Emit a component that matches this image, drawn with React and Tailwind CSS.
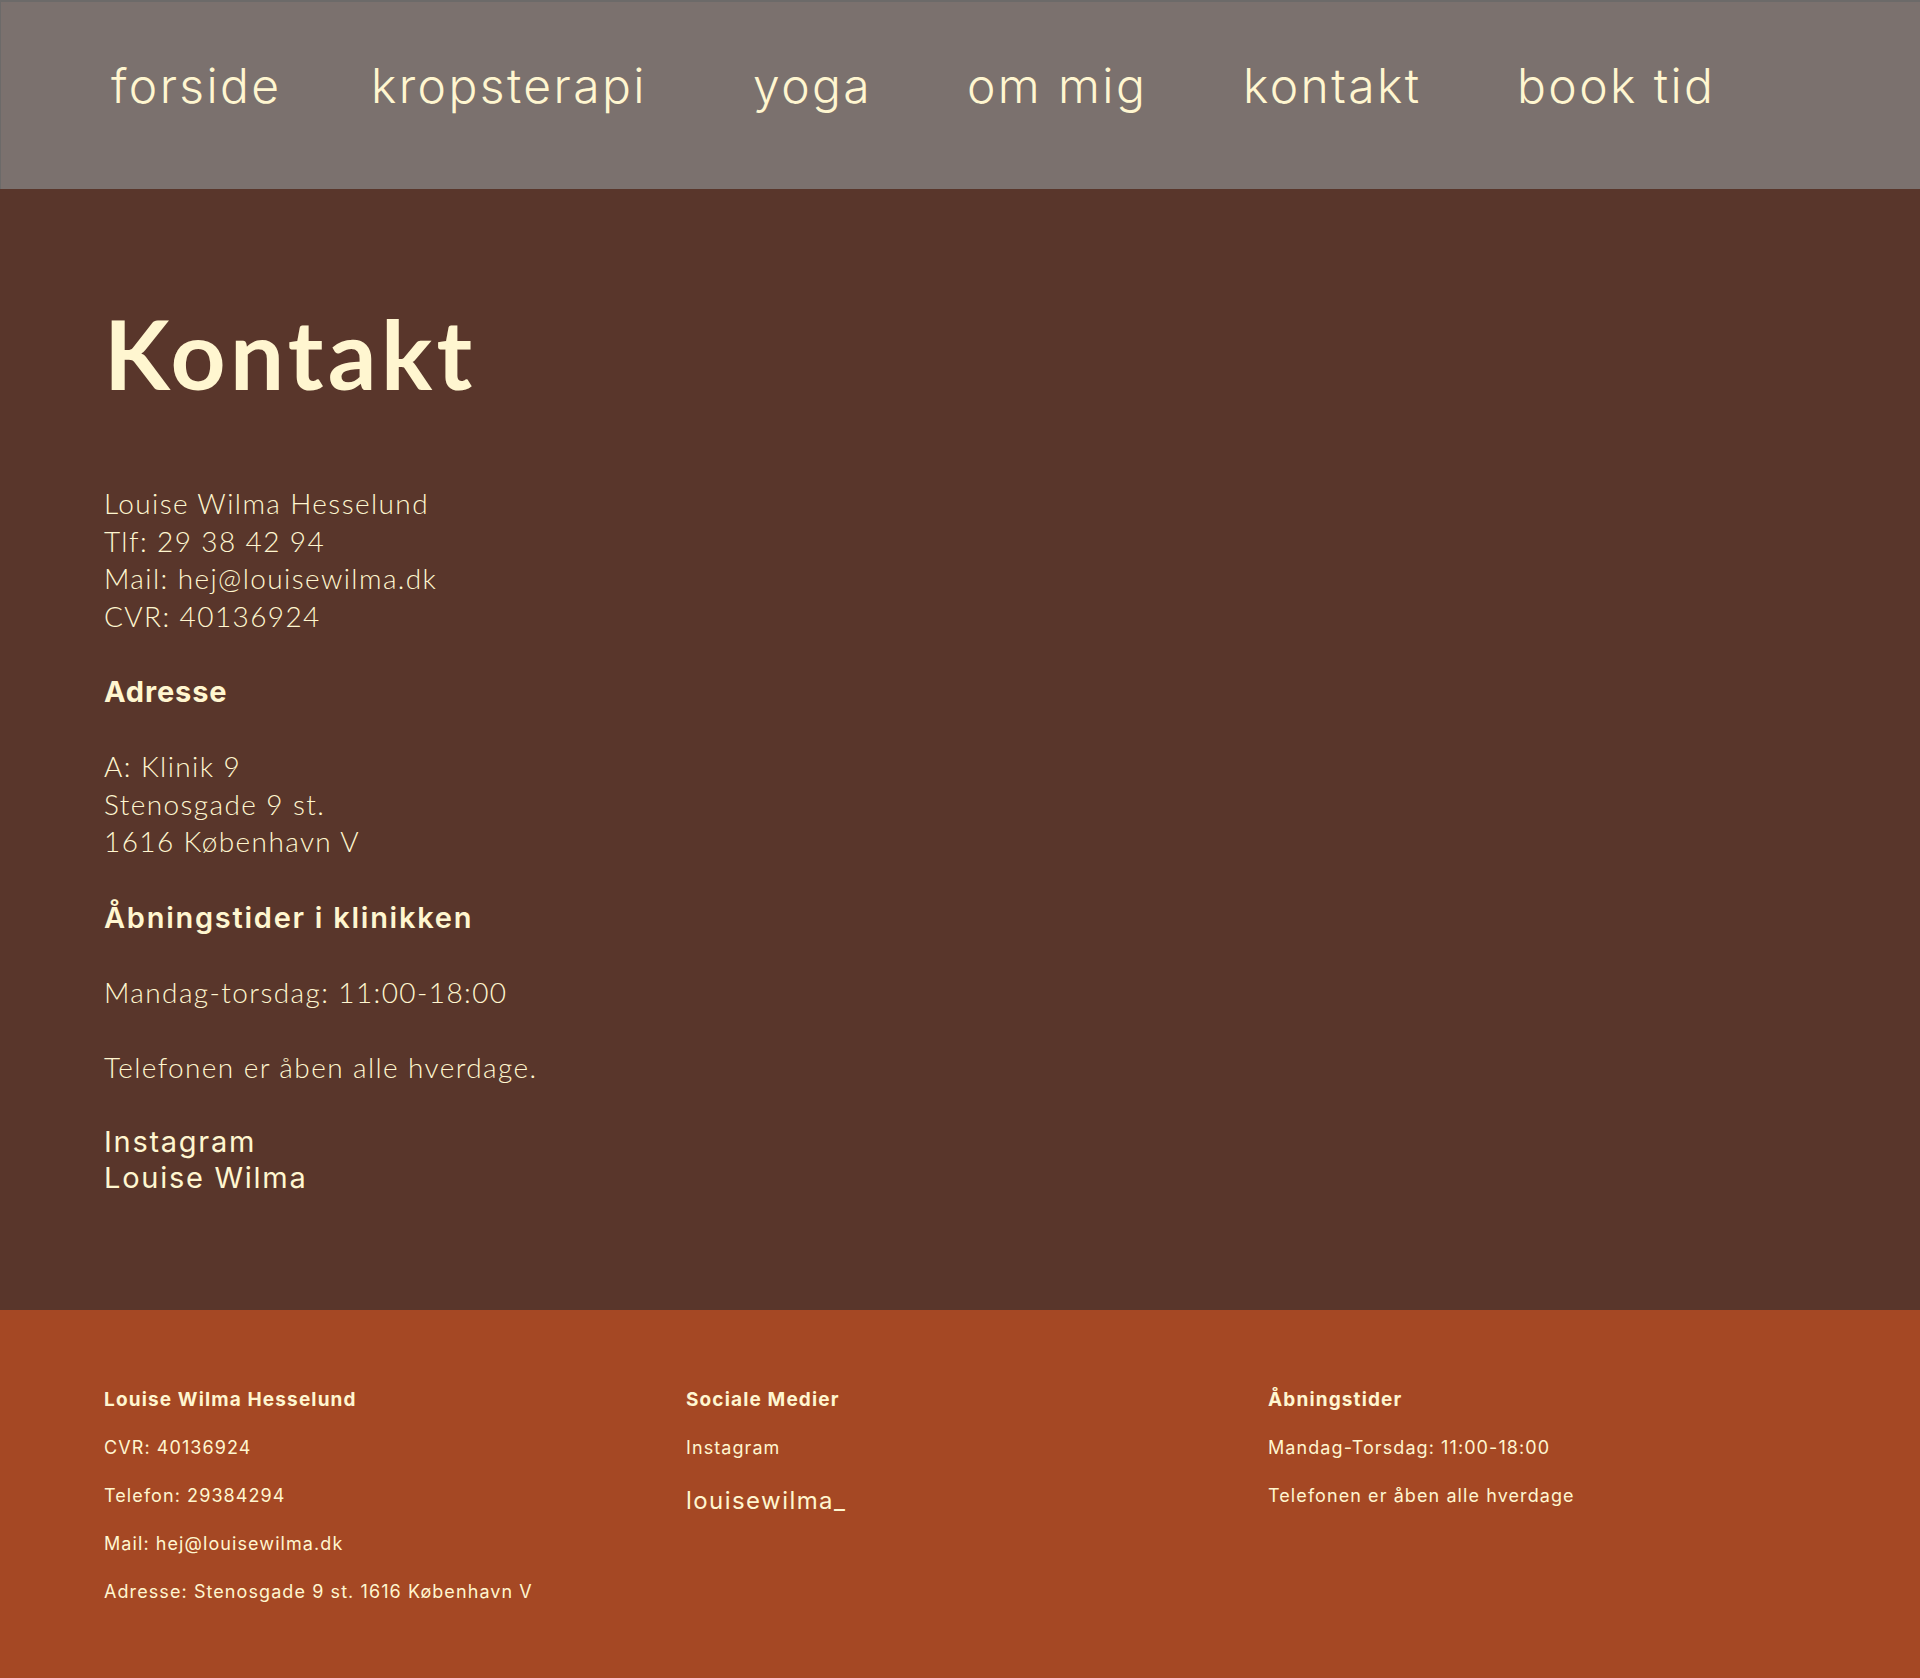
const cream = "text-[#fff6d0]";

const navItems = [
  { label: "forside", w: "w-[260px]" },
  { label: "kropsterapi", w: "w-[382px]" },
  { label: "yoga", w: "w-[214px]" },
  { label: "om mig", w: "w-[276px]" },
  { label: "kontakt", w: "w-[274px]" },
  { label: "book tid", w: "w-[220px]" },
];

const Navbar = () => (
  <nav className="h-[189px] bg-[#7b716e] border-t-2 border-l border-[#6c6a69]">
    <ul className={`flex pl-[110px] pt-[48px] text-[48px] leading-[72px] font-light tracking-[0.05em] ${cream}`} style={{ fontFamily: "Inter, 'Noto Sans', sans-serif" }}>
      {navItems.map((item) => (
        <li key={item.label} className={`shrink-0 ${item.w}`}>
          <a href="#">{item.label}</a>
        </li>
      ))}
    </ul>
  </nav>
);

const Line = ({ children }) => <p className="leading-[37.6px]">{children}</p>;

const Contact = () => (
  <main className={`bg-[#59362b] pl-[104px] pt-[116px] pb-[114px] ${cream}`}>
    <h1 className="text-[96px] leading-none font-bold tracking-[0.045em]" style={{ fontFamily: "Lato, sans-serif" }}>
      Kontakt
    </h1>

    <div className="mt-[84px] text-[28px] font-light tracking-[0.05em]" style={{ fontFamily: "Lato, sans-serif" }}>
      <div className="mb-[37.6px]">
        <Line>Louise Wilma Hesselund</Line>
        <Line>Tlf: 29 38 42 94</Line>
        <Line>Mail: hej@louisewilma.dk</Line>
        <Line>CVR: 40136924</Line>
      </div>

      <h3 className="mb-[37.6px] text-[29px] leading-[37.6px] font-bold tracking-[0.03em]" style={{ fontFamily: "Inter, sans-serif" }}>
        Adresse
      </h3>

      <div className="mb-[37.6px]">
        <Line>A: Klinik 9</Line>
        <Line>Stenosgade 9 st.</Line>
        <Line>1616 København V</Line>
      </div>

      <h3 className="mb-[37.6px] text-[29px] leading-[37.6px] font-semibold tracking-[0.06em]" style={{ fontFamily: "Inter, sans-serif" }}>
        Åbningstider i klinikken
      </h3>

      <div className="mb-[37.6px]">
        <Line>Mandag-torsdag: 11:00-18:00</Line>
      </div>

      <div className="mb-[37.6px]">
        <Line>Telefonen er åben alle hverdage.</Line>
      </div>

      <div className="text-[29px] leading-[36px] font-normal tracking-[0.06em]" style={{ fontFamily: "Inter, sans-serif" }}>
        <a href="#" className="block">Instagram</a>
        <a href="#" className="block">Louise Wilma</a>
      </div>
    </div>
  </main>
);

const FooterCol = ({ title, children }) => (
  <div className="flex flex-col">
    <h4 className="text-[19px] leading-[48px] font-bold tracking-[0.06em]">{title}</h4>
    {children}
  </div>
);

const FLine = ({ children }) => <p className="text-[18px] leading-[48px] tracking-[0.06em]">{children}</p>;

const Footer = () => (
  <footer className={`bg-[#a54824] pl-[104px] pt-[66px] pb-[58px] ${cream}`} style={{ fontFamily: "Inter, sans-serif" }}>
    <div className="grid grid-cols-3 w-[1746px]">
      <FooterCol title="Louise Wilma Hesselund">
        <FLine>CVR: 40136924</FLine>
        <FLine>Telefon: 29384294</FLine>
        <FLine>Mail: hej@louisewilma.dk</FLine>
        <FLine>Adresse: Stenosgade 9 st. 1616 København V</FLine>
      </FooterCol>
      <FooterCol title="Sociale Medier">
        <FLine>Instagram</FLine>
        <a href="#" className="pt-[5px] text-[24px] leading-[48px] tracking-[0.06em]">louisewilma_</a>
      </FooterCol>
      <FooterCol title="Åbningstider">
        <FLine>Mandag-Torsdag: 11:00-18:00</FLine>
        <FLine>Telefonen er åben alle hverdage</FLine>
      </FooterCol>
    </div>
  </footer>
);

const App = () => (
  <div className="w-[1920px] min-h-[1678px] bg-[#a54824]">
    <Navbar />
    <Contact />
    <Footer />
  </div>
);

export default App;
